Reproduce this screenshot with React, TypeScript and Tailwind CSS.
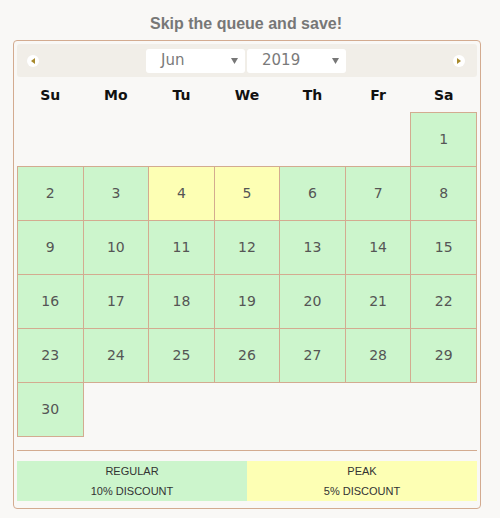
import React from 'react'

const GREEN = 'bg-[#ccf5cc]'
const YELLOW = 'bg-[#fdffb4]'
const PEAK_DAYS = [4, 5]

const WEEKDAYS = ['Su', 'Mo', 'Tu', 'We', 'Th', 'Fr', 'Sa']

// June 2019 starts on a Saturday
function buildWeeks(): (number | null)[][] {
  const cells: (number | null)[] = [null, null, null, null, null, null]
  for (let d = 1; d <= 30; d++) cells.push(d)
  while (cells.length % 7) cells.push(null)
  const weeks: (number | null)[][] = []
  for (let i = 0; i < cells.length; i += 7) weeks.push(cells.slice(i, i + 7))
  return weeks
}

function Arrow({ dir }: { dir: 'left' | 'right' }) {
  return (
    <span className="flex h-[12px] w-[12px] items-center justify-center rounded-full bg-white">
      <svg width="4" height="6" viewBox="0 0 4 6">
        {dir === 'left' ? (
          <polygon points="4,0 4,6 0,3" fill="#a88a2c" />
        ) : (
          <polygon points="0,0 0,6 4,3" fill="#a88a2c" />
        )}
      </svg>
    </span>
  )
}

function FakeSelect({ value }: { value: string }) {
  return (
    <div className="flex h-[24px] w-[99px] items-center justify-between rounded-[3px] bg-white pl-[15px] pr-[7px]">
      <span className="text-[15px] text-[#7a7a7a]" style={{ fontFamily: '"DejaVu Sans", Verdana, sans-serif' }}>{value}</span>
      <svg width="7" height="6" viewBox="0 0 7 6">
        <polygon points="0,0 7,0 3.5,6" fill="#777" />
      </svg>
    </div>
  )
}

export default function App() {
  const weeks = buildWeeks()

  return (
    <div className="h-[518px] w-[500px] bg-[#f9f8f6] pt-[14px]" style={{ fontFamily: '"Liberation Sans", Arial, sans-serif' }}>
      <h1 className="pr-[8px] text-center text-[16px] font-bold leading-[20px] text-[#777]">Skip the queue and save!</h1>

      <div className="ml-[13px] mt-[6px] h-[469px] w-[468px] rounded-[4px] border border-[#d3ab90] p-[3px]">
        {/* Header */}
        <div className="flex h-[33px] items-center justify-between rounded-[3px] bg-[#f1eee8] pl-[10px] pr-[12px]">
          <Arrow dir="left" />
          <div className="flex gap-[2px]">
            <FakeSelect value="Jun" />
            <FakeSelect value="2019" />
          </div>
          <Arrow dir="right" />
        </div>

        {/* Calendar grid */}
        <table className="w-[460px] table-fixed border-collapse" style={{ fontFamily: '"DejaVu Sans", Verdana, sans-serif' }}>
          <thead>
            <tr className="h-[35px]">
              {WEEKDAYS.map(d => (
                <th key={d} className="p-0 pt-[2px] text-[14px] font-bold text-[#111]">{d}</th>
              ))}
            </tr>
          </thead>
          <tbody>
            {weeks.map((week, wi) => (
              <tr key={wi} className="h-[54px]">
                {week.map((day, di) =>
                  day ? (
                    <td
                      key={di}
                      className={`border border-[#d3ab90] p-0 text-center text-[14px] text-[#555] ${PEAK_DAYS.includes(day) ? YELLOW : GREEN}`}
                    >
                      {day}
                    </td>
                  ) : (
                    <td key={di} className="p-0" />
                  )
                )}
              </tr>
            ))}
          </tbody>
        </table>

        <div className="mt-[13px] h-px bg-[#d3ab90]" />

        {/* Legend */}
        <div className="mt-[10px] flex text-center text-[11px] leading-[20px] text-[#333]">
          <div className={`flex-1 ${GREEN}`}>
            <div>REGULAR</div>
            <div>10% DISCOUNT</div>
          </div>
          <div className={`flex-1 ${YELLOW}`}>
            <div>PEAK</div>
            <div>5% DISCOUNT</div>
          </div>
        </div>
      </div>
    </div>
  )
}
